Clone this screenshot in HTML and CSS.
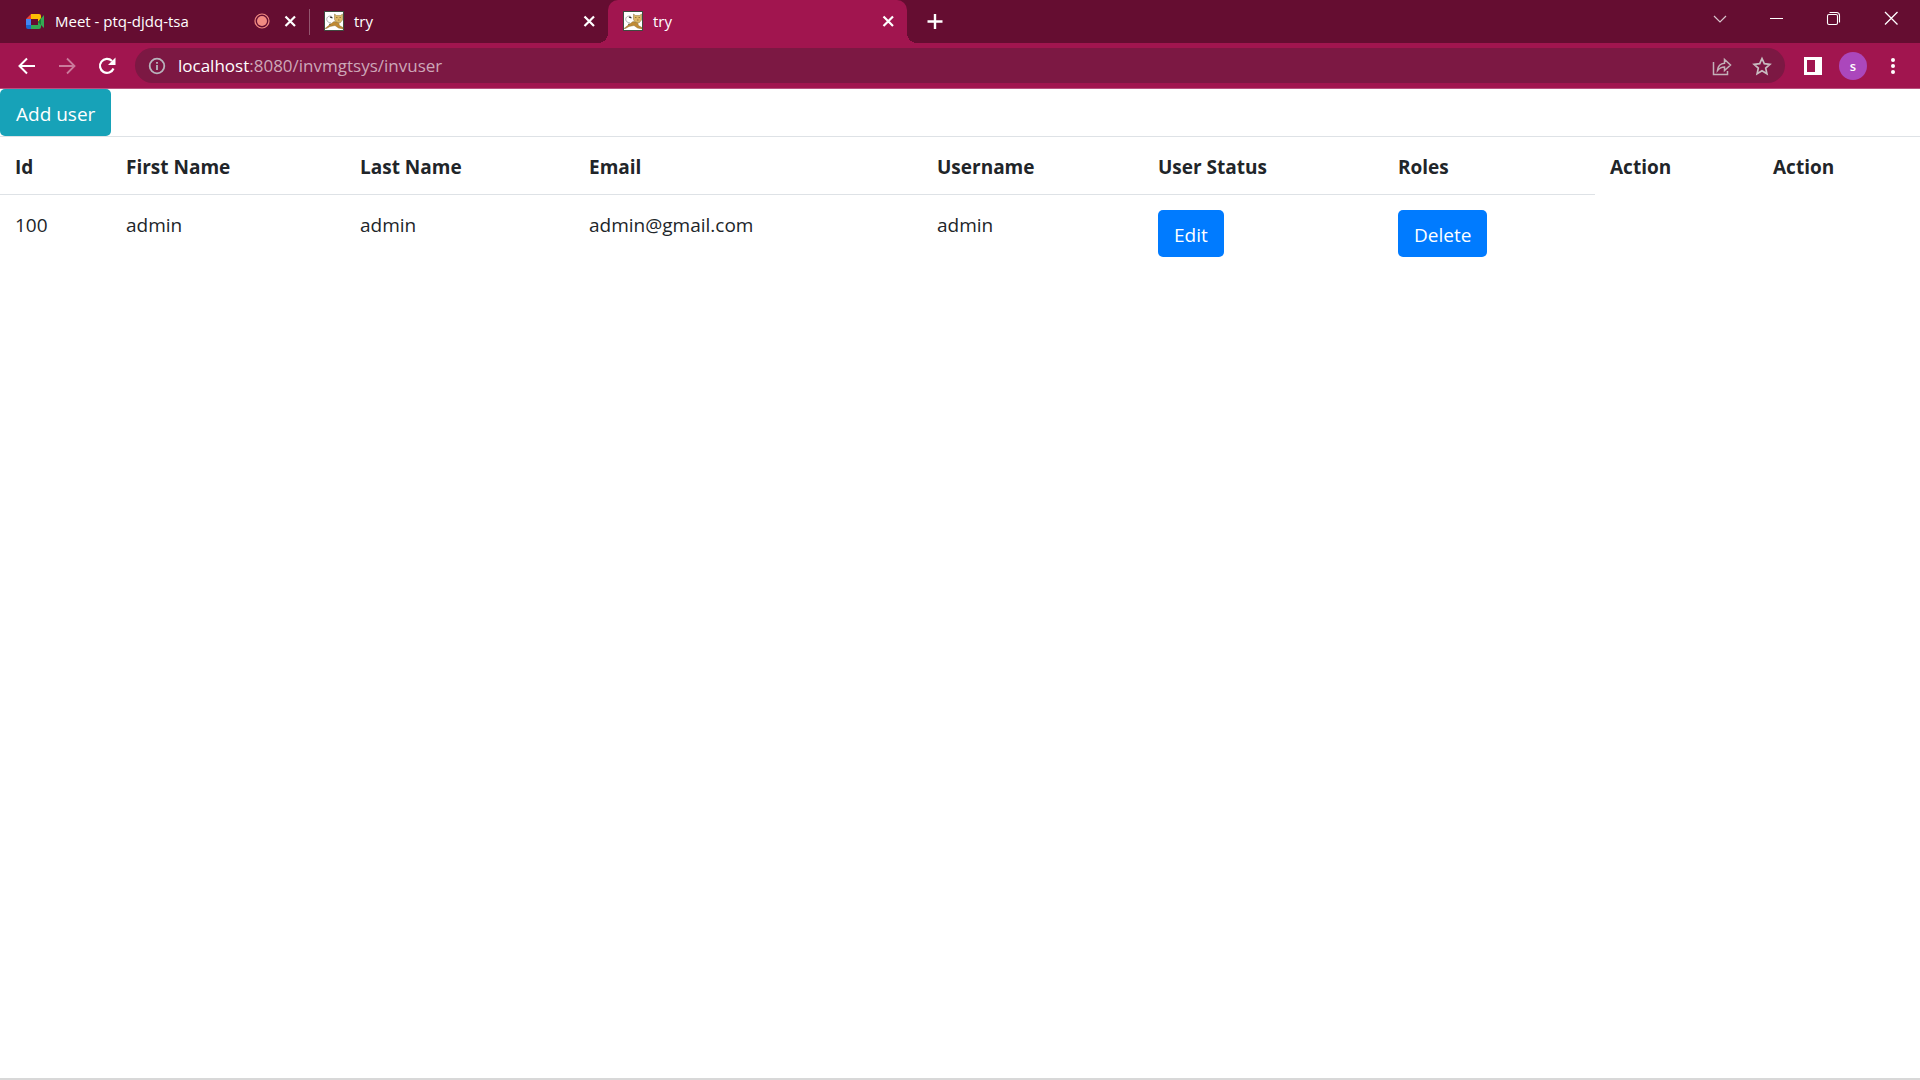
FILE: index.html
```html
<!DOCTYPE html>
<html lang="en">
<head>
<meta charset="utf-8">
<title>try</title>
<link rel="stylesheet" href="styles.css">
</head>
<body>
<svg class="defs" aria-hidden="true">
  <symbol id="x" viewBox="0 0 20 20"><path d="M5.500 5.500l9.500 9.500M15 5.500L5.500 15" stroke="#fff" stroke-width="2.200" fill="none"/></symbol>
  <symbol id="cat" viewBox="0 0 20 20">
    <path d="M0 0h20v20H0z" fill="#3f4a40"/><path d="M1 1h18v18H1z" fill="#fff"/>
    <path d="M8 5.500C4 4 2 7 3 9.500c.5 1.500 2 2 4 2.500" fill="none" stroke="#999" stroke-width=".8"/>
    <path d="M6 6l2.500 1M5.500 13l2 1.500" stroke="#222" stroke-width="1.300"/>
    <path d="M1 17.500L6 13.500l4-3 4.500 1 1 3 3.500 2v1.500l-4.500-1-3.500-2.500-5 1-3.500 2z" fill="#c08a35" stroke="#80622a" stroke-width=".4"/>
    <path d="M10.500 3l2 1.500h4L18.500 3v6l-2.500 3-4-1-1.500-2.500z" fill="#dcb766" stroke="#8d7440" stroke-width=".5"/>
    <path d="M12 6.500h1.500M15.500 6.500H17M14 9h1.500" stroke="#8a6c34" stroke-width=".8"/>
  </symbol>
</svg>
<header class="browser">
  <div class="strip">
    <div class="tab">
      <svg class="fav" viewBox="0 0 20 20"><path d="M1 8l5-5v5z" fill="#ea4335"/><path d="M6 3h8q2 0 2 2v4l-3 2V8H6z" fill="#fbbc04"/><path d="M1 8h5v6H1z" fill="#4285f4"/><path d="M1 14h5v4H3q-2 0-2-2z" fill="#1967d2"/><path d="M6 14h7v-3l6-7v13l-3-3v2q0 2-2 2H6z" fill="#34a853"/><path d="M13 11l3-4v7z" fill="#188038"/></svg>
      <span class="title">Meet - ptq-djdq-tsa</span>
      <svg class="rec" viewBox="0 0 16 16"><circle cx="8" cy="8" r="7" fill="none" stroke="#f28b82" stroke-width="1.200"/><circle cx="8" cy="8" r="5" fill="#f28b82"/></svg>
      <button class="icon" aria-label="Close tab"><svg><use href="#x"/></svg></button>
    </div>
    <div class="tab split">
      <svg class="fav"><use href="#cat"/></svg>
      <span class="title">try</span>
      <button class="icon" aria-label="Close tab"><svg><use href="#x"/></svg></button>
    </div>
    <div class="tab active">
      <svg class="fav"><use href="#cat"/></svg>
      <span class="title">try</span>
      <button class="icon" aria-label="Close tab"><svg><use href="#x"/></svg></button>
    </div>
    <button class="icon plus" aria-label="New tab"><svg viewBox="0 0 20 20"><path d="M10 2v15M2.500 9.500h15" stroke="#fff" stroke-width="2.400"/></svg></button>
    <div class="window">
      <button class="icon" aria-label="Search tabs"><svg viewBox="0 0 20 20"><path d="M4 8l6 6 6-6" fill="none" stroke="#d8c4cd" stroke-width="1.200"/></svg></button>
      <button class="icon" aria-label="Minimize"><svg viewBox="0 0 20 20"><path d="M3 10.500h13" stroke="#fff"/></svg></button>
      <button class="icon" aria-label="Restore"><svg viewBox="0 0 20 20" fill="none" stroke="#fff" stroke-width="1.100"><rect x="3.500" y="6.500" width="10" height="10" rx="1.500"/><path d="M5.500 4.500h7q3 0 3 3v7"/></svg></button>
      <button class="icon" aria-label="Close"><svg viewBox="0 0 20 20"><path d="M4 4l12.500 12.500M16.500 4L4 16.500" stroke="#fff" stroke-width="1.300"/></svg></button>
    </div>
  </div>
  <div class="toolbar">
    <nav class="nav">
      <button class="icon" aria-label="Back"><svg viewBox="0 0 20 20" fill="none" stroke="#fff" stroke-width="2"><path d="M18 10H3M10 2.500L2.500 10l7.500 7.500"/></svg></button>
      <button class="icon" aria-label="Forward"><svg viewBox="0 0 20 20" fill="none" stroke="#cb7a9c" stroke-width="1.800"><path d="M2 10h15M10 2.500l7.500 7.500-7.500 7.500"/></svg></button>
      <button class="icon" aria-label="Reload"><svg viewBox="0 0 20 20"><path d="M16.500 12.500A7 7 0 1 1 15 5" fill="none" stroke="#fff" stroke-width="2.200"/><path d="M18.500 1.500v7.500H11z" fill="#fff"/></svg></button>
    </nav>
    <div class="omnibox">
      <svg class="info" viewBox="0 0 18 18"><circle cx="9" cy="9" r="7.300" fill="none" stroke="#b8b4bc" stroke-width="1.800"/><path d="M9 8v5M9 5v1.800" stroke="#b8b4bc" stroke-width="1.800"/></svg>
      <div class="url"><b>localhost</b>:8080/invmgtsys/invuser</div>
      <button class="icon" aria-label="Share"><svg viewBox="0 0 20 20" fill="none" stroke="#c3b0b8" stroke-width="1.500"><path d="M1.500 6v12.500h14V15"/><path d="M5.500 14.500C6 9.500 9 7.500 12.500 7.300V3.500L18.500 9l-6 5.500V11C9.500 11 7.500 12 5.500 14.500z"/></svg></button>
      <button class="icon" aria-label="Bookmark"><svg viewBox="0 0 20 20"><path d="M10 2.500l2.300 5.200 5.600.6-4.200 3.800 1.200 5.600-4.900-2.900-4.900 2.900 1.200-5.600-4.200-3.800 5.600-.6z" fill="none" stroke="#c8bcc0" stroke-width="1.700"/></svg></button>
    </div>
    <button class="icon" aria-label="Side panel"><svg viewBox="0 0 20 20"><path d="M1 1h18v18H1zM4 4v12h8V4z" fill="#fff" fill-rule="evenodd"/></svg></button>
    <button class="avatar" aria-label="Profile">s</button>
    <button class="icon" aria-label="Menu"><svg viewBox="0 0 20 20" fill="#fff"><circle cx="10" cy="4" r="2"/><circle cx="10" cy="10" r="2"/><circle cx="10" cy="16" r="2"/></svg></button>
  </div>
</header>
<main class="page">
  <button class="btn info-btn">Add user</button>
  <table class="users">
    <colgroup><col class="c-id"><col class="c-first"><col class="c-last"><col class="c-email"><col class="c-name"><col class="c-status"><col class="c-roles"><col class="c-act"><col class="c-act"></colgroup>
    <thead><tr><th>Id</th><th>First Name</th><th>Last Name</th><th>Email</th><th>Username</th><th>User Status</th><th>Roles</th><th>Action</th><th>Action</th></tr></thead>
    <tbody><tr><td>100</td><td>admin</td><td>admin</td><td>admin@gmail.com</td><td>admin</td><td><button class="btn primary">Edit</button></td><td><button class="btn primary">Delete</button></td></tr></tbody>
  </table>
</main>
</body>
</html>
```
FILE: styles.css
```css
* { box-sizing: border-box; }
body {
  margin: 0;
  min-height: 100vh;
  display: flex;
  flex-direction: column;
  background: #fff;
  color: #212529;
  font: 19px/30px "Open Sans", "Noto Sans", sans-serif;
}
button { font: inherit; border: 0; cursor: pointer; }
.defs { position: absolute; width: 0; height: 0; }

.browser { background: #a1154f; border-bottom: 1px solid #b9527f; }
.strip {
  display: flex;
  height: 43px;
  padding: 0 19px 0 10px;
  background: #650d31;
  color: #fff;
  font-size: 15px;
}
.tab {
  position: relative;
  display: flex;
  align-items: center;
  flex: 0 1 299px;
  gap: 10px;
  padding: 0 9px 1px 15px;
}
.title { flex: 1; white-space: nowrap; line-height: 20px; }
.fav { width: 20px; height: 20px; }
.rec { width: 16px; height: 16px; }
.split::before {
  content: "";
  position: absolute;
  left: 0;
  top: 9px;
  width: 1px;
  height: 26px;
  background: #93566f;
}
.active { background: #a1154f; border-radius: 10px 10px 0 0; }
.active::before, .active::after {
  content: "";
  position: absolute;
  bottom: 0;
  width: 10px;
  height: 10px;
}
.active::before { right: 100%; background: radial-gradient(circle at 0 0, #650d31 10px, #a1154f 10px); }
.active::after { left: 100%; background: radial-gradient(circle at 100% 0, #650d31 10px, #a1154f 10px); }
.icon { flex: none; width: 20px; height: 20px; padding: 0; background: none; }
.icon svg { display: block; width: 20px; height: 20px; }
.plus { align-self: center; margin-left: 18px; }
.window { display: flex; gap: 37px; margin-left: auto; padding-top: 8px; }

.toolbar {
  display: flex;
  align-items: center;
  gap: 18px;
  height: 45px;
  padding: 0 17px;
}
.nav { display: flex; gap: 20px; }
.omnibox {
  display: flex;
  flex: 1;
  align-items: center;
  gap: 20px;
  height: 35px;
  padding: 0 13px;
  border-radius: 18px;
  background: #7c1843;
}
.info { width: 18px; height: 18px; }
.url { flex: 1; margin-left: -8px; color: #cda7b8; font-size: 17px; }
.url b { color: #fff; font-weight: 400; }
.avatar {
  width: 28px;
  height: 28px;
  margin: 0 -2px;
  padding: 0;
  border-radius: 50%;
  background: #ab47bc;
  color: #fff;
  font-size: 13px;
  font-weight: 600;
  line-height: 28px;
}

.page { flex: 1; border-bottom: 2px solid #d8d8d8; }
.btn {
  display: block;
  height: 47px;
  padding: 2px 16px 0;
  border-radius: 5px;
  color: #fff;
}
.info-btn { background: #17a2b8; }
.primary { background: #007bff; }
.users { width: 100%; table-layout: fixed; border-collapse: separate; border-spacing: 0; }
.users th, .users td {
  padding: 15px;
  border-top: 1px solid #dee2e6;
  text-align: left;
  vertical-align: top;
}
.users th { padding-bottom: 12px; font-weight: 700; }
.c-id { width: 111px; }
.c-first { width: 234px; }
.c-last { width: 229px; }
.c-email { width: 348px; }
.c-name { width: 221px; }
.c-status { width: 240px; }
.c-roles { width: 212px; }
.c-act { width: 163px; }
```
